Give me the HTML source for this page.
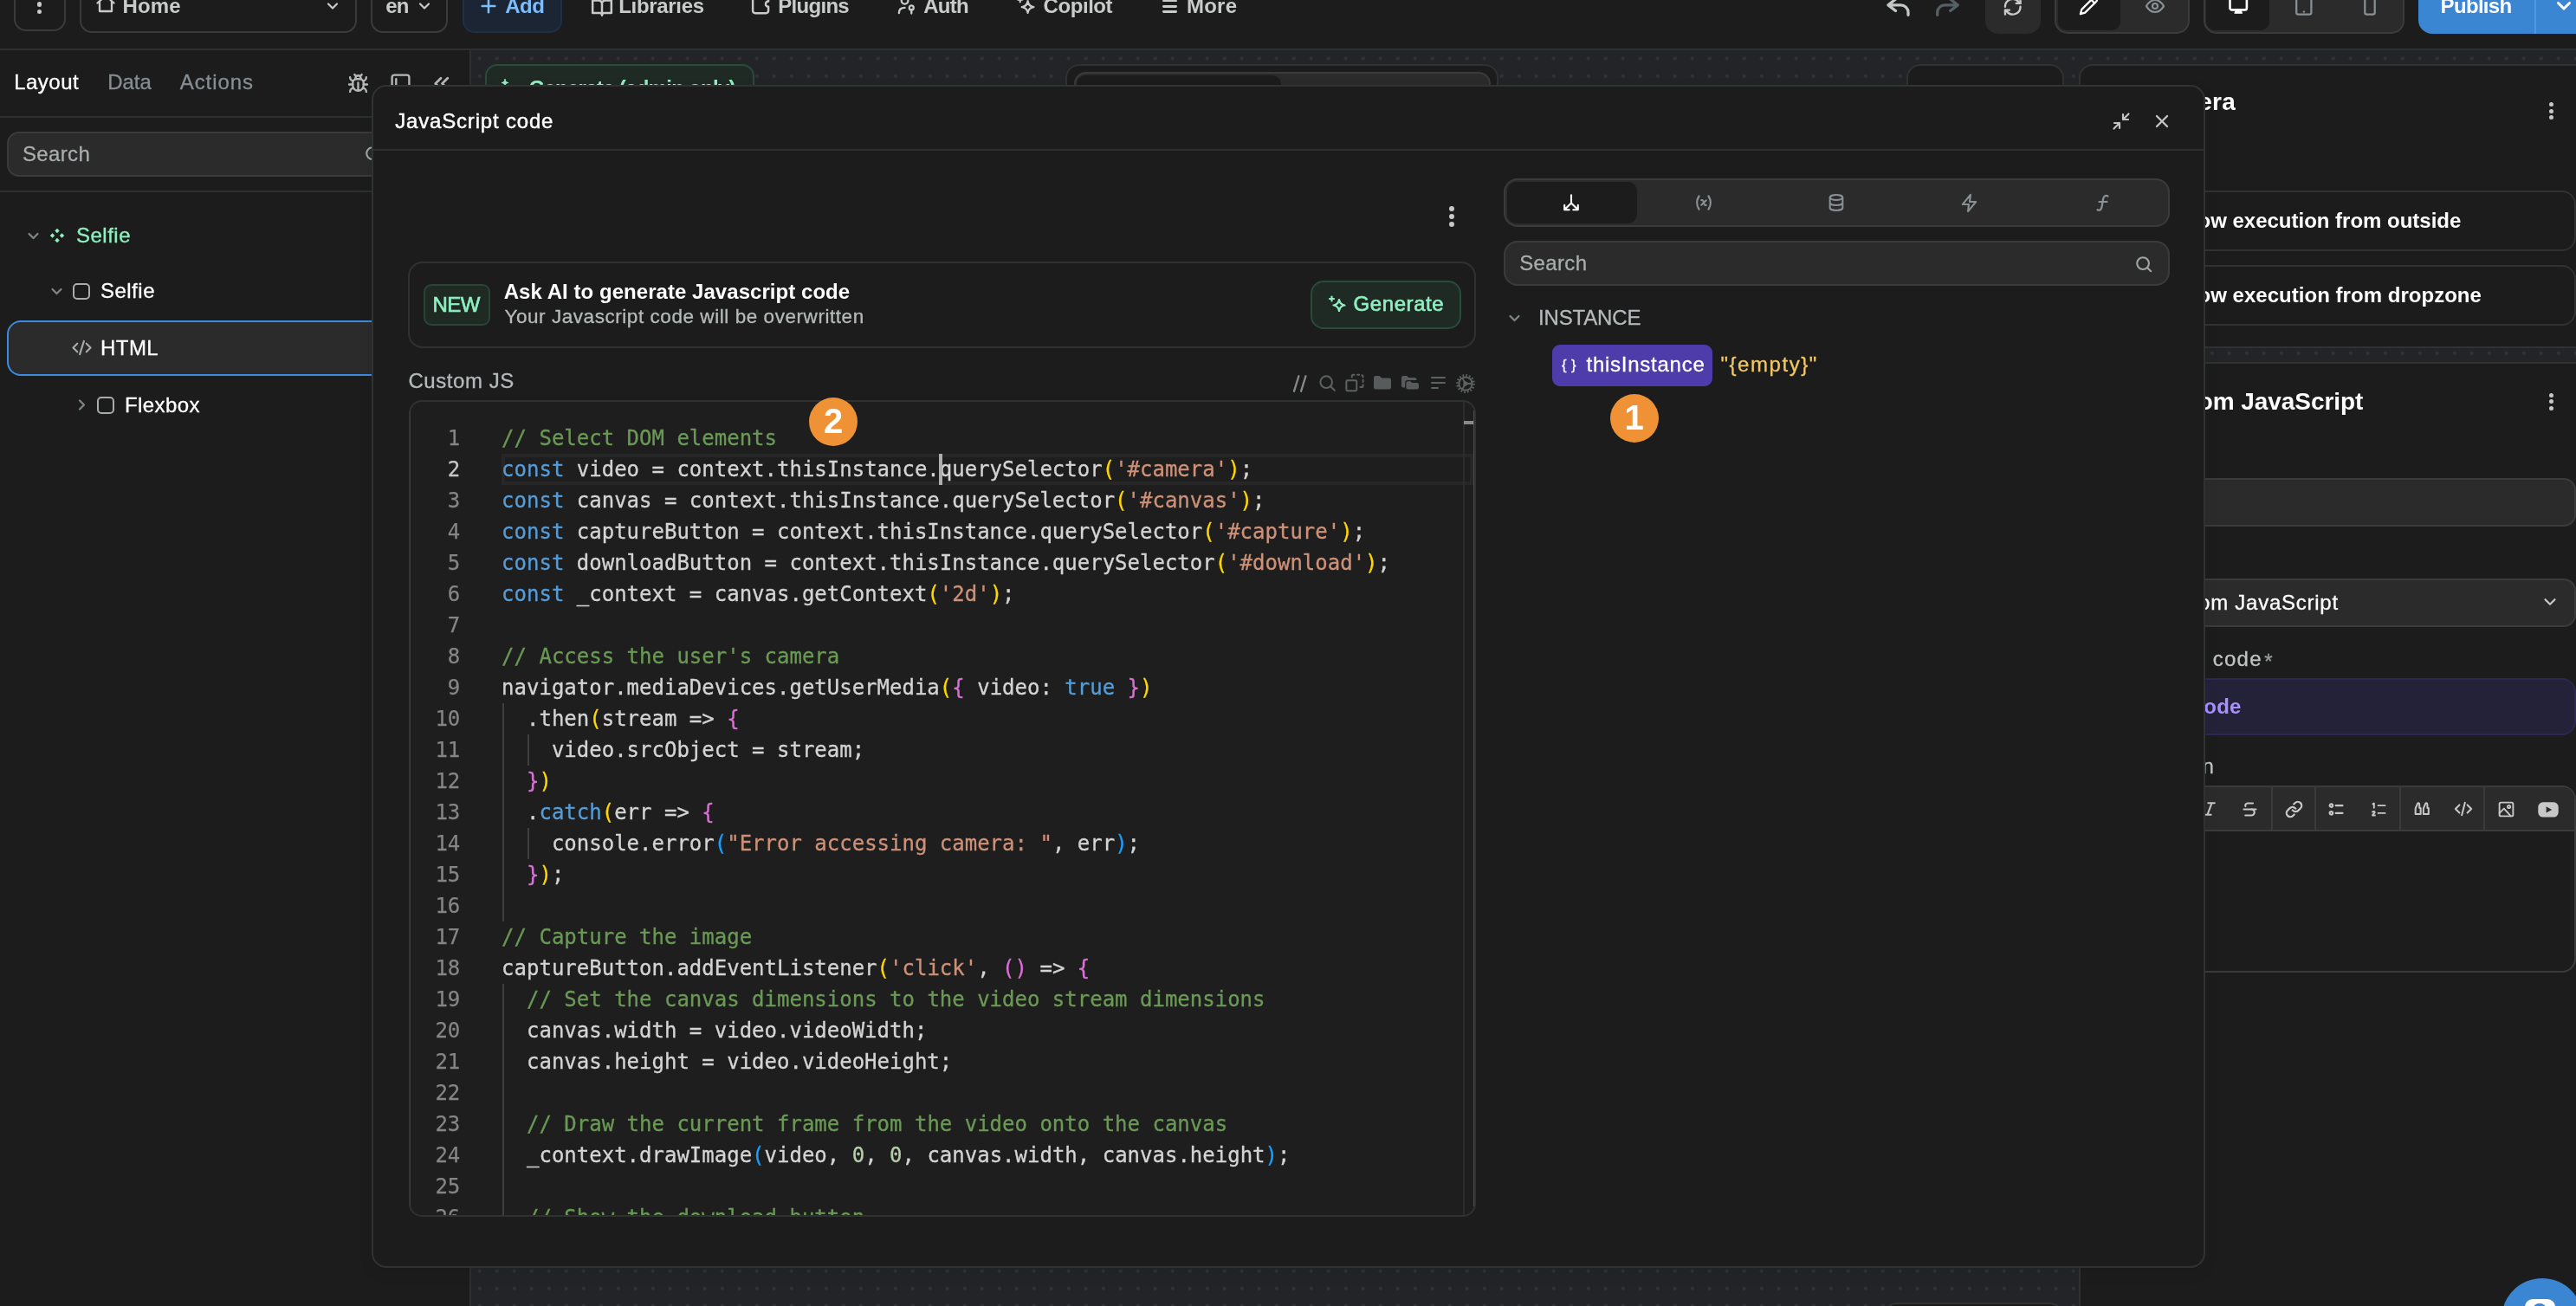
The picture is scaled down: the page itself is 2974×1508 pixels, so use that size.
<!DOCTYPE html>
<html lang="en"><head><meta charset="utf-8"><title>JavaScript code</title><style>
html,body{margin:0;padding:0;background:#1c1c1c;}
body{width:2974px;height:1508px;overflow:hidden;position:relative;font-family:"Liberation Sans", sans-serif;}
#root{position:absolute;left:0;top:0;width:2974px;height:1508px;overflow:hidden;will-change:transform;background:#1c1c1c;}
.t{position:absolute;white-space:pre;display:block;}
.b{position:absolute;box-sizing:border-box;}
.i{position:absolute;overflow:visible;}
.clip{position:absolute;overflow:hidden;}
.code{position:absolute;font-family:"DejaVu Sans Mono", "Liberation Mono", monospace;font-size:24px;line-height:36px;white-space:pre;color:#d4d4d4;-webkit-text-stroke-width:0.3px;}
.ln{position:absolute;font-family:"DejaVu Sans Mono", "Liberation Mono", monospace;font-size:24px;line-height:36px;white-space:pre;color:#858585;text-align:right;-webkit-text-stroke-width:0.25px;}
.c{color:#6a9955}.k{color:#569cd6}.s{color:#ce9178}.n{color:#b5cea8}.y{color:#ffd700}.p{color:#da70d6}.bl{color:#179fff}
</style></head><body>
<div id="root">
<div class="b" style="left:544px;top:58px;width:2430px;height:1450px;background-color:#222427;background-image:radial-gradient(circle at 2px 2px,#303236 0,#303236 1.7px,rgba(48,50,54,0) 2.4px);background-size:20px 20px;background-position:7.7px 7.7px;"></div>
<div class="b" style="left:559.50px;top:73.50px;width:311.00px;height:58.00px;background:#1f2a25;border:2px solid #2a4a3a;border-radius:14px;"></div>
<svg class="i" style="left:577.00px;top:91.50px;" width="24" height="24" viewBox="0 0 24 24" fill="none" stroke="#8ff0c0" stroke-width="2.2" stroke-linecap="round" stroke-linejoin="round"><path d="M14.500 7c.6 4 2.400 5.900 6.500 6.500-4.100.6-5.900 2.500-6.500 6.500-.6-4-2.400-5.900-6.500-6.500 4.100-.6 5.900-2.500 6.500-6.500z"/><path d="M6 -0.500c.3 2.500 1.500 3.700 4 4-2.500.3-3.700 1.500-4 4-.3-2.500-1.500-3.700-4-4 2.500-.3 3.700-1.500 4-4z" fill="#8ff0c0" stroke-width="1"/></svg>
<span class="t" style="top:89.68px;font-size:24px;font-weight:700;color:#8ff0c0;letter-spacing:-0.710px;line-height:24px;left:610.40px;">Generate (admin only)</span>
<div class="b" style="left:1230.00px;top:73.50px;width:500.00px;height:200.00px;background:#1c1c1c;border:2px solid #2f3231;border-radius:16px;"></div>
<div class="b" style="left:1239.50px;top:83.00px;width:481.50px;height:120.00px;background:#2b2b2b;border:2px solid #3a3b3b;border-radius:14px;"></div>
<div class="b" style="left:1243.00px;top:87.00px;width:236.00px;height:100.00px;background:#1c1c1c;border-radius:10px;"></div>
<div class="b" style="left:2200.80px;top:74.30px;width:182.50px;height:200.00px;background:#1c1c1c;border:2px solid #2f3231;border-radius:16px;"></div>
<div class="b" style="left:2176.70px;top:1504.00px;width:202.00px;height:40.00px;background:#1c1c1c;border:2px solid #2f3231;border-radius:12px;"></div>
<div class="b" style="left:2400.00px;top:74.30px;width:620.00px;height:327.70px;background:#1c1c1c;border:2px solid #2f3231;border-radius:16px 0 0 0;"></div>
<div class="b" style="left:2400.00px;top:417.70px;width:620.00px;height:1200.00px;background:#1c1c1c;border:2px solid #2f3231;"></div>
<span class="t" style="top:103.80px;font-size:28px;font-weight:700;color:#fff;letter-spacing:0.200px;line-height:28px;right:393.10px;">Open camera</span>
<div class="b" style="left:2943.1px;top:117.8px;width:5.2px;height:5.2px;border-radius:50%;background:#c8c8c8"></div>
<div class="b" style="left:2943.1px;top:125.6px;width:5.2px;height:5.2px;border-radius:50%;background:#c8c8c8"></div>
<div class="b" style="left:2943.1px;top:133.2px;width:5.2px;height:5.2px;border-radius:50%;background:#c8c8c8"></div>
<div class="b" style="left:2420.00px;top:219.80px;width:553.50px;height:70.00px;border:2px solid #2f3231;border-radius:16px;"></div>
<span class="t" style="top:242.68px;font-size:24px;font-weight:700;color:#fff;letter-spacing:-0.012px;line-height:24px;right:132.71px;">Allow execution from outside</span>
<div class="b" style="left:2420.00px;top:305.90px;width:553.50px;height:69.70px;border:2px solid #2f3231;border-radius:16px;"></div>
<span class="t" style="top:328.68px;font-size:24px;font-weight:700;color:#fff;letter-spacing:0.028px;line-height:24px;right:109.07px;">Allow execution from dropzone</span>
<span class="t" style="top:450.10px;font-size:28px;font-weight:700;color:#fff;letter-spacing:-0.057px;line-height:28px;right:245.66px;">Custom JavaScript</span>
<div class="b" style="left:2943.1px;top:453.5px;width:5.2px;height:5.2px;border-radius:50%;background:#c8c8c8"></div>
<div class="b" style="left:2943.1px;top:461.3px;width:5.2px;height:5.2px;border-radius:50%;background:#c8c8c8"></div>
<div class="b" style="left:2943.1px;top:468.9px;width:5.2px;height:5.2px;border-radius:50%;background:#c8c8c8"></div>
<div class="b" style="left:2420.00px;top:551.70px;width:553.50px;height:56.60px;background:#2b2b2b;border:2px solid #3a3b3b;border-radius:14px;"></div>
<div class="b" style="left:2420.00px;top:667.80px;width:553.50px;height:56.20px;background:#2b2b2b;border:2px solid #3a3b3b;border-radius:14px;"></div>
<span class="t" style="top:683.78px;font-size:24px;font-weight:400;color:#fff;letter-spacing:0.745px;line-height:24px;-webkit-text-stroke:0.3px #fff;right:274.15px;">Custom JavaScript</span>
<svg class="i" style="left:2932.70px;top:684.40px;" width="22" height="22" viewBox="0 0 24 24" fill="none" stroke="#c8c8c8" stroke-width="2.4" stroke-linecap="round" stroke-linejoin="round"><path d="m6 9 6 6 6-6"/></svg>
<span class="t" style="top:749.08px;font-size:24px;font-weight:400;color:#c2c4c4;letter-spacing:1.251px;line-height:24px;-webkit-text-stroke:0.3px #c2c4c4;right:362.25px;">JavaScript code</span>
<span class="t" style="top:752.08px;font-size:24px;font-weight:400;color:#9aa0a0;letter-spacing:1.056px;line-height:24px;-webkit-text-stroke:0.3px #9aa0a0;left:2614.20px;">*</span>
<div class="b" style="left:2420.00px;top:783.30px;width:553.50px;height:65.30px;background:#242238;border:2px solid #2b2854;border-radius:16px;"></div>
<span class="t" style="top:803.68px;font-size:24px;font-weight:700;color:#a891ff;letter-spacing:0.200px;line-height:24px;right:386.40px;">Edit code</span>
<span class="t" style="top:873.18px;font-size:24px;font-weight:400;color:#c2c4c4;letter-spacing:0.600px;line-height:24px;-webkit-text-stroke:0.3px #c2c4c4;right:417.50px;">Description</span>
<div class="b" style="left:2420.00px;top:907.40px;width:553.50px;height:216.00px;background:#1c1c1c;border:2px solid #3a3b3b;border-radius:16px;"></div>
<div class="b" style="left:2422.00px;top:909.40px;width:549.50px;height:49.30px;background:#2b2b2b;border-radius:14px 14px 0 0;"></div>
<div class="b" style="left:2422.00px;top:957.70px;width:549.50px;height:2.00px;background:#3a3b3b;"></div>
<div class="b" style="left:2622.20px;top:909.40px;width:2.00px;height:49.00px;background:#3a3c3c;"></div>
<div class="b" style="left:2672.30px;top:909.40px;width:2.00px;height:49.00px;background:#3a3c3c;"></div>
<div class="b" style="left:2769.80px;top:909.40px;width:2.00px;height:49.00px;background:#3a3c3c;"></div>
<div class="b" style="left:2867.30px;top:909.40px;width:2.00px;height:49.00px;background:#3a3c3c;"></div>
<svg class="i" style="left:2541.20px;top:924.40px;" width="20" height="20" viewBox="0 0 24 24" fill="none" stroke="#c8c8c8" stroke-width="2.4" stroke-linecap="round" stroke-linejoin="round"><path d="M19 4h-9M14 20H5M15 4 9 20"/></svg>
<svg class="i" style="left:2587.40px;top:923.90px;" width="21" height="21" viewBox="0 0 24 24" fill="none" stroke="#c8c8c8" stroke-width="2.4" stroke-linecap="round" stroke-linejoin="round"><path d="M16 4H9a3 3 0 0 0-2.830 4M14 12a4 4 0 0 1 0 8H6"/><path d="M4 12h16"/></svg>
<svg class="i" style="left:2637.50px;top:923.90px;" width="21" height="21" viewBox="0 0 24 24" fill="none" stroke="#c8c8c8" stroke-width="2.6" stroke-linecap="round" stroke-linejoin="round"><path d="M10 13a5 5 0 0 0 7.540.54l3-3a5 5 0 0 0-7.070-7.070l-1.720 1.710"/><path d="M14 11a5 5 0 0 0-7.540-.54l-3 3a5 5 0 0 0 7.070 7.070l1.710-1.710"/></svg>
<svg class="i" style="left:2687.10px;top:923.90px;" width="21" height="21" viewBox="0 0 24 24" fill="none" stroke="#c8c8c8" stroke-width="2.4" stroke-linecap="round" stroke-linejoin="round"><circle cx="5" cy="7" r="2"/><circle cx="5" cy="17" r="2"/><path d="M11 7h9M11 17h9"/></svg>
<svg class="i" style="left:2735.50px;top:923.90px;" width="21" height="21" viewBox="0 0 24 24" fill="none" stroke="#c8c8c8" stroke-width="2.2" stroke-linecap="round" stroke-linejoin="round"><path d="M11 7h9M11 17h9M4 5l1.500-1v6M3.500 15.500c.5-1 3-1 3 .5 0 1.200-3 2.200-3 4h3.200"/></svg>
<svg class="i" style="left:2784.60px;top:923.40px;" width="22" height="22" viewBox="0 0 24 24" fill="none" stroke="#c8c8c8" stroke-width="2.2" stroke-linecap="round" stroke-linejoin="round"><path d="M4 12c0-2 1.500-3 2.500-6.500C7 4 9 4.500 9 6.500V11h1.500v7.500h-6.500zM14 12c0-2 1.500-3 2.500-6.500C17 4 19 4.500 19 6.500V11h1.500v7.500H14z"/></svg>
<svg class="i" style="left:2833.00px;top:923.40px;" width="22" height="22" viewBox="0 0 24 24" fill="none" stroke="#c8c8c8" stroke-width="2.2" stroke-linecap="round" stroke-linejoin="round"><path d="m17 17 5-5-5-5M7 7l-5 5 5 5M14 4l-4 16"/></svg>
<svg class="i" style="left:2883.10px;top:923.90px;" width="21" height="21" viewBox="0 0 24 24" fill="none" stroke="#c8c8c8" stroke-width="2.2" stroke-linecap="round" stroke-linejoin="round"><rect x="3" y="3" width="18" height="18" rx="2"/><circle cx="15.500" cy="8.500" r="1.800"/><path d="m3 17 6-6 9 10"/></svg>
<svg class="i" style="left:2930px;top:925.600px" width="24" height="18" viewBox="0 0 24 18"><rect x="0.300" y="0.300" width="23.400" height="17.200" rx="5.500" fill="#c8c8c8"/><path d="M9.600 5.200v7.400l6.600-3.700z" fill="#2b2b2b"/></svg>
<div class="b" style="left:0.00px;top:0.00px;width:2974.00px;height:56.00px;background:#1c1c1c;"></div>
<div class="b" style="left:0.00px;top:56.00px;width:2974.00px;height:2.00px;background:#2d3030;"></div>
<div class="b" style="left:16.00px;top:-26.00px;width:59.60px;height:62.00px;border:2px solid #3a3b3b;border-radius:14px;"></div>
<div class="b" style="left:43.1px;top:2.4px;width:5.400px;height:5.400px;border-radius:50%;background:#c9cbcb"></div>
<div class="b" style="left:43.1px;top:10.9px;width:5.400px;height:5.400px;border-radius:50%;background:#c9cbcb"></div>
<div class="b" style="left:92.20px;top:-26.00px;width:319.50px;height:64.40px;border:2px solid #3a3b3b;border-radius:14px;"></div>
<svg class="i" style="left:110.00px;top:-7.80px;" width="24" height="24" viewBox="0 0 24 24" fill="none" stroke="#c9cbcb" stroke-width="2.3" stroke-linecap="round" stroke-linejoin="round"><path d="M2.500 11.500 12 3l9.500 8.500M5 9.500V21h14V9.500"/></svg>
<span class="t" style="top:-5.02px;font-size:24px;font-weight:700;color:#c9cbcb;letter-spacing:0.137px;line-height:24px;left:141.50px;">Home</span>
<svg class="i" style="left:374.00px;top:-3.00px;" width="20" height="20" viewBox="0 0 24 24" fill="none" stroke="#c9cbcb" stroke-width="2.6" stroke-linecap="round" stroke-linejoin="round"><path d="m6 9 6 6 6-6"/></svg>
<div class="b" style="left:427.90px;top:-26.00px;width:89.60px;height:64.40px;border:2px solid #3a3b3b;border-radius:14px;"></div>
<span class="t" style="top:-5.02px;font-size:24px;font-weight:700;color:#c9cbcb;letter-spacing:-0.816px;line-height:24px;left:445.30px;">en</span>
<svg class="i" style="left:480.00px;top:-3.00px;" width="20" height="20" viewBox="0 0 24 24" fill="none" stroke="#c9cbcb" stroke-width="2.6" stroke-linecap="round" stroke-linejoin="round"><path d="m6 9 6 6 6-6"/></svg>
<div class="b" style="left:534.30px;top:-26.00px;width:114.50px;height:64.40px;background:#1b2533;border:2px solid #1d3045;border-radius:14px;"></div>
<svg class="i" style="left:553.00px;top:-4.50px;" width="22" height="22" viewBox="0 0 24 24" fill="none" stroke="#7dbdfc" stroke-width="2.8" stroke-linecap="round" stroke-linejoin="round"><path d="M4 12h16M12 4v16"/></svg>
<span class="t" style="top:-5.02px;font-size:24px;font-weight:700;color:#7dbdfc;letter-spacing:-0.528px;line-height:24px;left:583.30px;">Add</span>
<svg class="i" style="left:681.90px;top:-5.40px;" width="26" height="26" viewBox="0 0 24 24" fill="none" stroke="#c9cbcb" stroke-width="2.3" stroke-linecap="round" stroke-linejoin="round"><path d="M2 5h6.500a3.500 3.500 0 0 1 3.500 3.500V21a2.500 2.500 0 0 0-2.500-2.500H2zM22 5h-6.500A3.500 3.500 0 0 0 12 8.500V21a2.500 2.500 0 0 1 2.500-2.500H22z"/></svg>
<span class="t" style="top:-5.02px;font-size:24px;font-weight:700;color:#c9cbcb;letter-spacing:-0.336px;line-height:24px;left:714.30px;">Libraries</span>
<svg class="i" style="left:867.20px;top:-7.30px;" width="25.4" height="25.4" viewBox="0 0 24 24" fill="none" stroke="#c9cbcb" stroke-width="2.3" stroke-linecap="round" stroke-linejoin="round"><path d="M4.500 3h12a2.500 2.500 0 0 1 2.500 2.500V8a3 3 0 0 0 0 6v4.500a2.500 2.500 0 0 1-2.500 2.500h-12A2.500 2.500 0 0 1 2 18.500v-13A2.500 2.500 0 0 1 4.500 3z"/></svg>
<span class="t" style="top:-5.02px;font-size:24px;font-weight:700;color:#c9cbcb;letter-spacing:-0.695px;line-height:24px;left:898.20px;">Plugins</span>
<svg class="i" style="left:1034.80px;top:-4.70px;" width="23" height="23" viewBox="0 0 24 24" fill="none" stroke="#c9cbcb" stroke-width="2.4" stroke-linecap="round" stroke-linejoin="round"><circle cx="10" cy="6" r="4"/><path d="M3 21c0-4.500 3-6.500 7-6.500"/><circle cx="18" cy="14.500" r="2.600"/><path d="M18 17v4.500"/></svg>
<span class="t" style="top:-5.02px;font-size:24px;font-weight:700;color:#c9cbcb;letter-spacing:-0.685px;line-height:24px;left:1066.20px;">Auth</span>
<svg class="i" style="left:1172.30px;top:-5.50px;" width="25" height="25" viewBox="0 0 24 24" fill="none" stroke="#c9cbcb" stroke-width="2.2" stroke-linecap="round" stroke-linejoin="round"><path d="M14 6c.6 4.200 2.300 5.900 6.500 6.500-4.200.6-5.900 2.300-6.500 6.500-.6-4.200-2.300-5.900-6.500-6.500C11.700 11.900 13.400 10.200 14 6z"/><path d="M5.500 2v5M3 4.500h5"/></svg>
<span class="t" style="top:-5.02px;font-size:24px;font-weight:700;color:#c9cbcb;letter-spacing:-0.423px;line-height:24px;left:1204.50px;">Copilot</span>
<div class="b" style="left:1341.50px;top:-0.40px;width:17.00px;height:2.80px;background:#c9cbcb;border-radius:1.4px;"></div>
<div class="b" style="left:1341.50px;top:6.10px;width:17.00px;height:2.80px;background:#c9cbcb;border-radius:1.4px;"></div>
<div class="b" style="left:1341.50px;top:12.30px;width:17.00px;height:2.80px;background:#c9cbcb;border-radius:1.4px;"></div>
<span class="t" style="top:-5.02px;font-size:24px;font-weight:700;color:#c9cbcb;letter-spacing:0.285px;line-height:24px;left:1369.90px;">More</span>
<svg class="i" style="left:2170px;top:-10px" width="100" height="40" viewBox="2170 -10 100 40" fill="none" stroke-width="3.300" stroke-linecap="round" stroke-linejoin="round"><path d="M2188.500 -1 2180 5.900l8.500 6.600M2180.500 5.900H2194.500a8.500 8.500 0 0 1 8.500 8.500V17.300" stroke="#c4c7c7"/><path d="M2251.700 -1 2260.200 5.900l-8.500 6.600M2259.700 5.900H2245.200a8.500 8.500 0 0 0-8.500 8.500V17.300" stroke="#566064"/></svg>
<div class="b" style="left:2291.90px;top:-26.00px;width:64.20px;height:65.00px;background:#2b2b2b;border-radius:15px;"></div>
<svg class="i" style="left:2312.25px;top:-4.45px;" width="23.5" height="23.5" viewBox="0 0 24 24" fill="none" stroke="#c9cbcb" stroke-width="2.4" stroke-linecap="round" stroke-linejoin="round"><path d="M3 12a9 9 0 0 1 15.700-6L21 8"/><path d="M21 3v5h-5"/><path d="M21 12a9 9 0 0 1-15.700 6L3 16"/><path d="M3 21v-5h5"/></svg>
<div class="b" style="left:2372.00px;top:-26.00px;width:156.00px;height:64.80px;background:#2b2b2b;border:2px solid #3a3b3b;border-radius:15px;"></div>
<div class="b" style="left:2375.50px;top:-26.00px;width:72.30px;height:60.50px;background:#1c1c1c;border-radius:10px;"></div>
<svg class="i" style="left:2400.20px;top:-5.50px;" width="23" height="23" viewBox="0 0 24 24" fill="none" stroke="#fff" stroke-width="2.4" stroke-linecap="round" stroke-linejoin="round"><path d="M17 3a2.830 2.830 0 1 1 4 4L7.500 20.500 2 22l1.500-5.500z"/><path d="m15 5 4 4"/></svg>
<svg class="i" style="left:2476.00px;top:-5.00px;" width="24" height="24" viewBox="0 0 24 24" fill="none" stroke="#8a9194" stroke-width="2.2" stroke-linecap="round" stroke-linejoin="round"><path d="M2 12s3.500-7 10-7 10 7 10 7-3.500 7-10 7S2 12 2 12z"/><circle cx="12" cy="12" r="3"/></svg>
<div class="b" style="left:2543.90px;top:-26.00px;width:232.00px;height:64.80px;background:#2b2b2b;border:2px solid #3a3b3b;border-radius:15px;"></div>
<div class="b" style="left:2547.30px;top:-26.00px;width:72.50px;height:60.50px;background:#1c1c1c;border-radius:10px;"></div>
<svg class="i" style="left:2570px;top:-10px" width="30" height="30" viewBox="0 0 30 30" fill="none" stroke="#fff" stroke-width="2.600" stroke-linejoin="round"><rect x="4.500" y="-4" width="19.400" height="25.400" rx="2.200"/><path d="M10 25.200h8.400l-1.200-3h-6z" fill="#fff" stroke-width="1.200"/></svg>
<svg class="i" style="left:2645px;top:-10px" width="30" height="30" viewBox="0 0 30 30" fill="none" stroke="#8a9194" stroke-width="2.200" stroke-linecap="round"><rect x="6.200" y="-6" width="17.200" height="32.600" rx="2.200"/><path d="M14.800 23.600h.1" stroke-width="2.400"/></svg>
<svg class="i" style="left:2721px;top:-10px" width="30" height="30" viewBox="0 0 30 30" fill="none" stroke="#8a9194" stroke-width="2.200"><rect x="9.300" y="-6" width="11.400" height="32.600" rx="2.200"/></svg>
<div class="b" style="left:2791.80px;top:-26.00px;width:240.00px;height:64.60px;background:#3b86d3;border-radius:16px;"></div>
<div class="b" style="left:2925.70px;top:-26.00px;width:2.20px;height:64.60px;background:#4e98e6;"></div>
<span class="t" style="top:-5.02px;font-size:24px;font-weight:700;color:#fff;letter-spacing:-0.679px;line-height:24px;left:2817.60px;">Publish</span>
<svg class="i" style="left:2947.60px;top:-4.70px;" width="24" height="24" viewBox="0 0 24 24" fill="none" stroke="#fff" stroke-width="3" stroke-linecap="round" stroke-linejoin="round"><path d="m5.500 8.500 6.500 6.500 6.500-6.500"/></svg>
<div class="b" style="left:0.00px;top:58.00px;width:542.00px;height:1450.00px;background:#1c1c1c;"></div>
<div class="b" style="left:542.00px;top:58.00px;width:2.00px;height:1450.00px;background:#2c2f2f;"></div>
<span class="t" style="top:83.48px;font-size:24px;font-weight:400;color:#fff;letter-spacing:0.487px;line-height:24px;-webkit-text-stroke:0.3px #fff;left:16.20px;">Layout</span>
<span class="t" style="top:83.48px;font-size:24px;font-weight:400;color:#868e92;letter-spacing:-0.034px;line-height:24px;-webkit-text-stroke:0.3px #868e92;left:124.20px;">Data</span>
<span class="t" style="top:83.48px;font-size:24px;font-weight:400;color:#868e92;letter-spacing:0.899px;line-height:24px;-webkit-text-stroke:0.3px #868e92;left:207.80px;">Actions</span>
<svg class="i" style="left:401.30px;top:83.80px;" width="25" height="25" viewBox="0 0 24 24" fill="none" stroke="#b4b8b8" stroke-width="2.3" stroke-linecap="round" stroke-linejoin="round"><path d="m8 2 1.900 1.900M14.100 3.900 16 2"/><path d="M9 7.100v-1a3 3 0 0 1 6 0v1"/><path d="M12 20c-3.300 0-6-2.700-6-6v-3a4 4 0 0 1 4-4h4a4 4 0 0 1 4 4v3c0 3.300-2.700 6-6 6zM12 20v-9"/><path d="M6.500 9C4.600 8.800 3 7.100 3 5M6 13H2M3 21c0-2.100 1.700-3.900 3.800-4M21 5c0 2.100-1.600 3.800-3.500 4M22 13h-4M17.200 17c2.100.1 3.800 1.900 3.800 4"/></svg>
<svg class="i" style="left:449.50px;top:83.80px;" width="25" height="25" viewBox="0 0 24 24" fill="none" stroke="#b4b8b8" stroke-width="2.3" stroke-linecap="round" stroke-linejoin="round"><rect x="2.500" y="2.500" width="19" height="19" rx="2.500"/><path d="M7 7v10"/></svg>
<svg class="i" style="left:496.70px;top:83.80px;" width="25" height="25" viewBox="0 0 24 24" fill="none" stroke="#b4b8b8" stroke-width="2.6" stroke-linecap="round" stroke-linejoin="round"><path d="m11.500 18-6-6 6-6M19 18l-6-6 6-6"/></svg>
<div class="b" style="left:0.00px;top:133.80px;width:542.00px;height:2.00px;background:#2d3030;"></div>
<div class="b" style="left:8.00px;top:151.50px;width:527.00px;height:52.50px;background:#2b2b2b;border:2px solid #3a3b3b;border-radius:14px;"></div>
<span class="t" style="top:165.78px;font-size:24px;font-weight:400;color:#a8adae;letter-spacing:0.371px;line-height:24px;-webkit-text-stroke:0.3px #a8adae;left:25.90px;">Search</span>
<svg class="i" style="left:420.00px;top:166.50px;" width="22" height="22" viewBox="0 0 24 24" fill="none" stroke="#a0a6a8" stroke-width="2.3" stroke-linecap="round" stroke-linejoin="round"><circle cx="11" cy="11" r="7.500"/><path d="m21 21-4.700-4.700"/></svg>
<div class="b" style="left:0.00px;top:219.90px;width:542.00px;height:2.00px;background:#2d3030;"></div>
<svg class="i" style="left:29.50px;top:263.50px;" width="17" height="17" viewBox="0 0 24 24" fill="none" stroke="#7d8588" stroke-width="3.2" stroke-linecap="round" stroke-linejoin="round"><path d="m5 8.500 7 7 7-7"/></svg>
<svg class="i" style="left:57px;top:263px" width="18" height="18" viewBox="0 0 18 18" fill="#8ff0c0"><path d="M9 0.800 11.700 3.500 9 6.200 6.300 3.500zM3.500 6.300 6.200 9 3.500 11.700.8 9zM14.500 6.300 17.200 9 14.500 11.700 11.800 9zM9 11.800 11.700 14.500 9 17.200 6.300 14.500z"/></svg>
<span class="t" style="top:259.58px;font-size:24px;font-weight:400;color:#8ff0c0;letter-spacing:0.531px;line-height:24px;-webkit-text-stroke:0.3px #8ff0c0;left:87.90px;">Selfie</span>
<svg class="i" style="left:57.30px;top:327.60px;" width="17" height="17" viewBox="0 0 24 24" fill="none" stroke="#7d8588" stroke-width="3.2" stroke-linecap="round" stroke-linejoin="round"><path d="m5 8.500 7 7 7-7"/></svg>
<div class="b" style="left:84.40px;top:326.50px;width:19.30px;height:19.30px;border:2px solid #a8acac;border-radius:5px;"></div>
<span class="t" style="top:323.78px;font-size:24px;font-weight:400;color:#fff;letter-spacing:0.511px;line-height:24px;-webkit-text-stroke:0.3px #fff;left:115.90px;">Selfie</span>
<div class="b" style="left:8.00px;top:370.00px;width:527.00px;height:64.00px;background:#2b2b2b;border:2px solid #3d8be0;border-radius:16px;"></div>
<svg class="i" style="left:82.70px;top:390.00px;" width="23" height="23" viewBox="0 0 24 24" fill="none" stroke="#a8acac" stroke-width="2.2" stroke-linecap="round" stroke-linejoin="round"><path d="m17.500 17 5-5-5-5M6.500 7l-5 5 5 5M14.500 4l-5 16"/></svg>
<span class="t" style="top:389.68px;font-size:24px;font-weight:400;color:#fff;letter-spacing:0.419px;line-height:24px;-webkit-text-stroke:0.3px #fff;left:116.10px;">HTML</span>
<svg class="i" style="left:85.70px;top:459.30px;" width="17" height="17" viewBox="0 0 24 24" fill="none" stroke="#7d8588" stroke-width="3.2" stroke-linecap="round" stroke-linejoin="round"><path d="m8.500 5 7 7-7 7"/></svg>
<div class="b" style="left:112.20px;top:458.40px;width:19.40px;height:19.40px;border:2px solid #a8acac;border-radius:5px;"></div>
<span class="t" style="top:455.98px;font-size:24px;font-weight:400;color:#fff;letter-spacing:0.409px;line-height:24px;-webkit-text-stroke:0.3px #fff;left:144.00px;">Flexbox</span>
<div class="b" style="left:429.30px;top:98.00px;width:2116.70px;height:1366.00px;background:#1c1c1c;border:2px solid #2f3332;border-radius:17px;box-shadow:0 6px 18px rgba(0,0,0,.07);"></div>
<span class="t" style="top:127.88px;font-size:24px;font-weight:400;color:#fff;letter-spacing:0.810px;line-height:24px;left:456.30px;-webkit-text-stroke:0.45px #fff;">JavaScript code</span>
<svg class="i" style="left:2436.60px;top:128.00px;" width="24" height="24" viewBox="0 0 24 24" fill="none" stroke="#c0c4c4" stroke-width="2.2" stroke-linecap="round" stroke-linejoin="round"><path d="M4 14h6v6M20 10h-6V4M14 10l6.500-6.500M3.500 20.500 10 14"/></svg>
<svg class="i" style="left:2484.40px;top:128.20px;" width="24" height="24" viewBox="0 0 24 24" fill="none" stroke="#c0c4c4" stroke-width="2.4" stroke-linecap="round" stroke-linejoin="round"><path d="M18 6 6 18M6 6l12 12"/></svg>
<div class="b" style="left:431.30px;top:172.00px;width:2112.70px;height:2.00px;background:#2d3030;"></div>
<div class="b" style="left:1673.4px;top:237.5px;width:6px;height:6px;border-radius:50%;background:#c8c8c8"></div>
<div class="b" style="left:1673.4px;top:246.8px;width:6px;height:6px;border-radius:50%;background:#c8c8c8"></div>
<div class="b" style="left:1673.4px;top:256.1px;width:6px;height:6px;border-radius:50%;background:#c8c8c8"></div>
<div class="b" style="left:471.20px;top:301.50px;width:1232.80px;height:100.40px;border:2px solid #2e3231;border-radius:17px;"></div>
<div class="b" style="left:489.40px;top:328.00px;width:77.00px;height:47.80px;background:#1f2a25;border:2px solid #2a4437;border-radius:9px;"></div>
<span class="t" style="top:339.68px;font-size:24px;font-weight:400;color:#8ff0c0;letter-spacing:-0.450px;line-height:24px;left:499.40px;-webkit-text-stroke:0.6px #8ff0c0;">NEW</span>
<span class="t" style="top:324.68px;font-size:24px;font-weight:700;color:#fff;letter-spacing:0.047px;line-height:24px;left:581.70px;">Ask AI to generate Javascript code</span>
<span class="t" style="top:355.15px;font-size:22.5px;font-weight:400;color:#b6babb;letter-spacing:0.556px;line-height:22.5px;-webkit-text-stroke:0.3px #b6babb;left:582.40px;">Your Javascript code will be overwritten</span>
<div class="b" style="left:1513.10px;top:323.60px;width:174.20px;height:56.70px;background:#1f2a25;border:2px solid #2a4a3a;border-radius:15px;"></div>
<svg class="i" style="left:1531.60px;top:340.00px;" width="24" height="24" viewBox="0 0 24 24" fill="none" stroke="#8ff0c0" stroke-width="2.2" stroke-linecap="round" stroke-linejoin="round"><path d="M14 6c.6 4.200 2.300 5.900 6.500 6.500-4.200.6-5.900 2.300-6.500 6.500-.6-4.200-2.300-5.900-6.500-6.500C11.700 11.900 13.400 10.200 14 6z"/><path d="M5.500 2.500v5M3 5h5"/></svg>
<span class="t" style="top:339.48px;font-size:24px;font-weight:400;color:#8ff0c0;letter-spacing:0.589px;line-height:24px;left:1562.50px;-webkit-text-stroke:0.6px #8ff0c0;">Generate</span>
<span class="t" style="top:427.58px;font-size:24px;font-weight:400;color:#b6babb;letter-spacing:0.578px;line-height:24px;-webkit-text-stroke:0.3px #b6babb;left:471.40px;">Custom JS</span>
<svg class="i" style="left:1489.65px;top:432.15px;" width="21.5" height="21.5" viewBox="0 0 24 24" fill="none" stroke="#868a8a" stroke-width="2.6" stroke-linecap="round" stroke-linejoin="round"><path d="M4.500 22 10.500 2.500M13.500 22 19.500 2.500"/></svg>
<svg class="i" style="left:1521.70px;top:431.50px;" width="21" height="21" viewBox="0 0 24 24" fill="none" stroke="#5d6161" stroke-width="2.3" stroke-linecap="round" stroke-linejoin="round"><circle cx="10.500" cy="10.500" r="7.800"/><path d="m21.500 21.500-5.300-5.300"/></svg>
<svg class="i" style="left:1553.40px;top:430.80px;" width="22" height="22" viewBox="0 0 24 24" fill="none" stroke="#5d6161" stroke-width="2.2" stroke-linecap="round" stroke-linejoin="round"><rect x="1.500" y="9" width="13" height="13" rx="1.500"/><path d="M8.500 5V4a2 2 0 0 1 2-2h1M15.500 2h2M21 2.500a2 2 0 0 1 1.500 2V5M22.500 8.500v2.500M22.500 14.500v1a2 2 0 0 1-2 2h-1.500" /></svg>
<svg class="i" style="left:1586.300px;top:434.300px" width="20" height="15.500" viewBox="0 0 24 18.600" fill="#575b5b"><path d="M0 2.500A2.500 2.500 0 0 1 2.500 0h5.500L11 3h10.500A2.500 2.500 0 0 1 24 5.500v10.600a2.500 2.500 0 0 1-2.500 2.500h-19A2.500 2.500 0 0 1 0 16.100z"/></svg>
<svg class="i" style="left:1618.200px;top:434.300px" width="20" height="15.500" viewBox="0 0 24 18.600" fill="#575b5b"><path d="M0 2.500A2.500 2.500 0 0 1 2.500 0h5L10 2.500h8.500a2.500 2.500 0 0 1 2.500 2.500v1H8.500A3.500 3.500 0 0 0 5 9.500v6.800H2.500A2.500 2.500 0 0 1 0 13.800z"/><path d="M6.500 10a2.500 2.500 0 0 1 2.500-2.500h3.500l2.200 2.200h6.800a2.500 2.500 0 0 1 2.500 2.500v3.900a2.500 2.500 0 0 1-2.500 2.500H9a2.500 2.500 0 0 1-2.500-2.500z"/></svg>
<div class="b" style="left:1651.70px;top:435.00px;width:17.00px;height:2.40px;background:#5d6161;border-radius:1.2px;"></div>
<div class="b" style="left:1651.70px;top:440.80px;width:17.00px;height:2.40px;background:#5d6161;border-radius:1.2px;"></div>
<div class="b" style="left:1651.70px;top:446.60px;width:9.80px;height:2.40px;background:#5d6161;border-radius:1.2px;"></div>
<svg class="i" style="left:1680.400px;top:431.200px" width="24" height="24" viewBox="0 0 24 24" fill="none" stroke="#5d6161" stroke-linecap="round" stroke-linejoin="round"><circle cx="12" cy="12" r="9.600" stroke-width="2.600" stroke-dasharray="1.700 2.070" stroke-linecap="butt"/><circle cx="12" cy="12" r="7.600" stroke-width="2"/><path d="M12 12 19 12M12 12 8.500 6M12 12 8.500 18M10.300 9.200v5.600l4.600-2.800z" stroke-width="1.800"/></svg>
<div class="clip" style="left:471.8px;top:462px;width:1231.9px;height:943px;border-radius:15px;background:#1e1e1e;"><div class="b" style="left:107.7px;top:62px;width:1121.5px;height:36px;border:4px solid #272727;"></div><div class="b" style="left:108.3px;top:350px;width:2px;height:252px;background:#3f3f3f"></div><div class="b" style="left:137.2px;top:386px;width:2px;height:36px;background:#3f3f3f"></div><div class="b" style="left:137.2px;top:494px;width:2px;height:36px;background:#3f3f3f"></div><div class="b" style="left:108.3px;top:674px;width:2px;height:324px;background:#3f3f3f"></div><div class="ln" style="left:0;width:59.5px;top:26px;color:#858585">1</div><div class="code" style="left:107.3px;top:26px"><span class="c">// Select DOM elements</span></div><div class="ln" style="left:0;width:59.5px;top:62px;color:#c6c6c6">2</div><div class="code" style="left:107.3px;top:62px"><span class="k">const</span> video = context.thisInstance.querySelector<span class="y">(</span><span class="s">'#camera'</span><span class="y">)</span>;</div><div class="ln" style="left:0;width:59.5px;top:98px;color:#858585">3</div><div class="code" style="left:107.3px;top:98px"><span class="k">const</span> canvas = context.thisInstance.querySelector<span class="y">(</span><span class="s">'#canvas'</span><span class="y">)</span>;</div><div class="ln" style="left:0;width:59.5px;top:134px;color:#858585">4</div><div class="code" style="left:107.3px;top:134px"><span class="k">const</span> captureButton = context.thisInstance.querySelector<span class="y">(</span><span class="s">'#capture'</span><span class="y">)</span>;</div><div class="ln" style="left:0;width:59.5px;top:170px;color:#858585">5</div><div class="code" style="left:107.3px;top:170px"><span class="k">const</span> downloadButton = context.thisInstance.querySelector<span class="y">(</span><span class="s">'#download'</span><span class="y">)</span>;</div><div class="ln" style="left:0;width:59.5px;top:206px;color:#858585">6</div><div class="code" style="left:107.3px;top:206px"><span class="k">const</span> _context = canvas.getContext<span class="y">(</span><span class="s">'2d'</span><span class="y">)</span>;</div><div class="ln" style="left:0;width:59.5px;top:242px;color:#858585">7</div><div class="ln" style="left:0;width:59.5px;top:278px;color:#858585">8</div><div class="code" style="left:107.3px;top:278px"><span class="c">// Access the user's camera</span></div><div class="ln" style="left:0;width:59.5px;top:314px;color:#858585">9</div><div class="code" style="left:107.3px;top:314px">navigator.mediaDevices.getUserMedia<span class="y">(</span><span class="p">{</span> video: <span class="k">true</span> <span class="p">}</span><span class="y">)</span></div><div class="ln" style="left:0;width:59.5px;top:350px;color:#858585">10</div><div class="code" style="left:107.3px;top:350px">  .then<span class="y">(</span>stream =&gt; <span class="p">{</span></div><div class="ln" style="left:0;width:59.5px;top:386px;color:#858585">11</div><div class="code" style="left:107.3px;top:386px">    video.srcObject = stream;</div><div class="ln" style="left:0;width:59.5px;top:422px;color:#858585">12</div><div class="code" style="left:107.3px;top:422px">  <span class="p">}</span><span class="y">)</span></div><div class="ln" style="left:0;width:59.5px;top:458px;color:#858585">13</div><div class="code" style="left:107.3px;top:458px">  .<span class="k">catch</span><span class="y">(</span>err =&gt; <span class="p">{</span></div><div class="ln" style="left:0;width:59.5px;top:494px;color:#858585">14</div><div class="code" style="left:107.3px;top:494px">    console.error<span class="bl">(</span><span class="s">"Error accessing camera: "</span>, err<span class="bl">)</span>;</div><div class="ln" style="left:0;width:59.5px;top:530px;color:#858585">15</div><div class="code" style="left:107.3px;top:530px">  <span class="p">}</span><span class="y">)</span>;</div><div class="ln" style="left:0;width:59.5px;top:566px;color:#858585">16</div><div class="ln" style="left:0;width:59.5px;top:602px;color:#858585">17</div><div class="code" style="left:107.3px;top:602px"><span class="c">// Capture the image</span></div><div class="ln" style="left:0;width:59.5px;top:638px;color:#858585">18</div><div class="code" style="left:107.3px;top:638px">captureButton.addEventListener<span class="y">(</span><span class="s">'click'</span>, <span class="p">()</span> =&gt; <span class="p">{</span></div><div class="ln" style="left:0;width:59.5px;top:674px;color:#858585">19</div><div class="code" style="left:107.3px;top:674px">  <span class="c">// Set the canvas dimensions to the video stream dimensions</span></div><div class="ln" style="left:0;width:59.5px;top:710px;color:#858585">20</div><div class="code" style="left:107.3px;top:710px">  canvas.width = video.videoWidth;</div><div class="ln" style="left:0;width:59.5px;top:746px;color:#858585">21</div><div class="code" style="left:107.3px;top:746px">  canvas.height = video.videoHeight;</div><div class="ln" style="left:0;width:59.5px;top:782px;color:#858585">22</div><div class="ln" style="left:0;width:59.5px;top:818px;color:#858585">23</div><div class="code" style="left:107.3px;top:818px">  <span class="c">// Draw the current frame from the video onto the canvas</span></div><div class="ln" style="left:0;width:59.5px;top:854px;color:#858585">24</div><div class="code" style="left:107.3px;top:854px">  _context.drawImage<span class="bl">(</span>video, <span class="n">0</span>, <span class="n">0</span>, canvas.width, canvas.height<span class="bl">)</span>;</div><div class="ln" style="left:0;width:59.5px;top:890px;color:#858585">25</div><div class="ln" style="left:0;width:59.5px;top:926px;color:#858585">26</div><div class="code" style="left:107.3px;top:926px">  <span class="c">// Show the download button</span></div><div class="b" style="left:611.8px;top:62px;width:4.200px;height:36px;background:#aeafad"></div><div class="b" style="left:1217.7px;top:0;width:1.500px;height:943px;background:#2c2c2c"></div><div class="b" style="left:1218.7px;top:24.3px;width:10.500px;height:3.400px;background:#8a8a8a"></div></div>
<div class="b" style="left:471.80px;top:462.00px;width:1231.90px;height:943.00px;border:2px solid #2e3231;border-radius:15px;"></div>
<div class="b" style="left:473.30px;top:474.00px;width:1.00px;height:919.00px;background:#25405f;"></div>
<div class="b" style="left:1701.00px;top:474.00px;width:1.20px;height:919.00px;background:#2b5185;"></div>
<div class="b" style="left:1735.50px;top:206.10px;width:769.00px;height:55.80px;background:#2b2b2b;border:2px solid #3a3b3b;border-radius:16px;"></div>
<div class="b" style="left:1740.00px;top:209.80px;width:149.70px;height:48.40px;background:#1c1c1c;border-radius:11px;"></div>
<svg class="i" style="left:1803.40px;top:223.30px;" width="22" height="22" viewBox="0 0 24 24" fill="none" stroke="#fff" stroke-width="2.3" stroke-linecap="round" stroke-linejoin="round"><path d="M12 2.500v10M12 12.500 4 20.500M12 12.500l8 8M3.500 15v6h6M20.500 15v6h-6"/></svg>
<svg class="i" style="left:1955.400px;top:222.300px" width="24" height="24" viewBox="0 0 24 24" fill="none" stroke="#8a9194" stroke-width="2.300" stroke-linecap="round"><path d="M6.500 4.500c-3 4.500-3 10.500 0 15M17.500 4.500c3 4.500 3 10.500 0 15"/><path d="M9.200 9.200c1.500-.8 2.200.4 2.800 2.800s1.300 3.600 2.800 2.800M14.800 9.200l-5.600 5.600" stroke-width="2"/></svg>
<svg class="i" style="left:2109.40px;top:223.00px;" width="22" height="22" viewBox="0 0 24 24" fill="none" stroke="#8a9194" stroke-width="2.2" stroke-linecap="round" stroke-linejoin="round"><ellipse cx="12" cy="5.500" rx="8" ry="3.200"/><path d="M4 5.500v13c0 1.800 3.600 3.200 8 3.200s8-1.400 8-3.200v-13M4 12c0 1.800 3.600 3.200 8 3.200s8-1.400 8-3.200"/></svg>
<svg class="i" style="left:2261.90px;top:222.50px;" width="23" height="23" viewBox="0 0 24 24" fill="none" stroke="#8a9194" stroke-width="2.2" stroke-linecap="round" stroke-linejoin="round"><path d="M13.500 2 4 13.500h7.500L10.500 22 20 10.500h-7.500z"/></svg>
<svg class="i" style="left:2416px;top:222px" width="24" height="24" viewBox="0 0 24 24" fill="none" stroke="#8a9194" stroke-width="2.200" stroke-linecap="round" stroke-linejoin="round"><path d="M17.500 4.500c-3-1.500-5 .5-5.500 3.500l-1.500 9c-.5 3-2.500 4.500-5 3.200M7.500 11h9"/></svg>
<div class="b" style="left:1735.50px;top:278.20px;width:769.00px;height:51.90px;background:#2b2b2b;border:2px solid #3a3b3b;border-radius:16px;"></div>
<span class="t" style="top:291.68px;font-size:24px;font-weight:400;color:#a8adae;letter-spacing:0.351px;line-height:24px;-webkit-text-stroke:0.3px #a8adae;left:1754.20px;">Search</span>
<svg class="i" style="left:2463.60px;top:293.50px;" width="22" height="22" viewBox="0 0 24 24" fill="none" stroke="#a0a6a8" stroke-width="2.3" stroke-linecap="round" stroke-linejoin="round"><circle cx="11" cy="11" r="7.500"/><path d="m21 21-4.700-4.700"/></svg>
<svg class="i" style="left:1739.70px;top:359.00px;" width="17" height="17" viewBox="0 0 24 24" fill="none" stroke="#7d8588" stroke-width="3.2" stroke-linecap="round" stroke-linejoin="round"><path d="m5 8.500 7 7 7-7"/></svg>
<span class="t" style="top:355.38px;font-size:24px;font-weight:400;color:#b6babb;letter-spacing:-0.168px;line-height:24px;-webkit-text-stroke:0.3px #b6babb;left:1776.00px;">INSTANCE</span>
<div class="b" style="left:1792.40px;top:397.80px;width:185.00px;height:48.00px;background:#4f3cab;border-radius:9px;"></div>
<span class="t" style="top:413.43px;font-size:16.5px;font-weight:400;color:#fff;letter-spacing:0.545px;line-height:16.5px;-webkit-text-stroke:0.3px #fff;left:1802.90px;font-family:"DejaVu Sans Mono",monospace;">{ }</span>
<span class="t" style="top:409.18px;font-size:24px;font-weight:400;color:#fff;letter-spacing:0.747px;line-height:24px;left:1831.50px;-webkit-text-stroke:0.3px #fff;">thisInstance</span>
<span class="t" style="top:409.18px;font-size:24px;font-weight:400;color:#f4c763;letter-spacing:1.558px;line-height:24px;-webkit-text-stroke:0.3px #f4c763;left:1986.40px;">"{empty}"</span>
<div class="b" style="left:1858.6px;top:454.6px;width:56px;height:56px;border-radius:50%;background:#ef9235;color:#fff;font-weight:700;font-size:40px;line-height:54px;text-align:center;">1</div>
<div class="b" style="left:934.2px;top:458.7px;width:56px;height:56px;border-radius:50%;background:#ef9235;color:#fff;font-weight:700;font-size:40px;line-height:54px;text-align:center;">2</div>
<div class="b" style="left:2888.300px;top:1475.700px;width:94px;height:94px;border-radius:50%;background:#3b86d3"></div>
<div class="b" style="left:2914.500px;top:1499.600px;width:35px;height:34px;border-radius:9px 9px 9px 9px;background:#fff"></div>
<div class="b" style="left:2924.500px;top:1504.800px;width:14px;height:10px;border-radius:50%;background:#3b86d3"></div>
</div>
</body></html>
